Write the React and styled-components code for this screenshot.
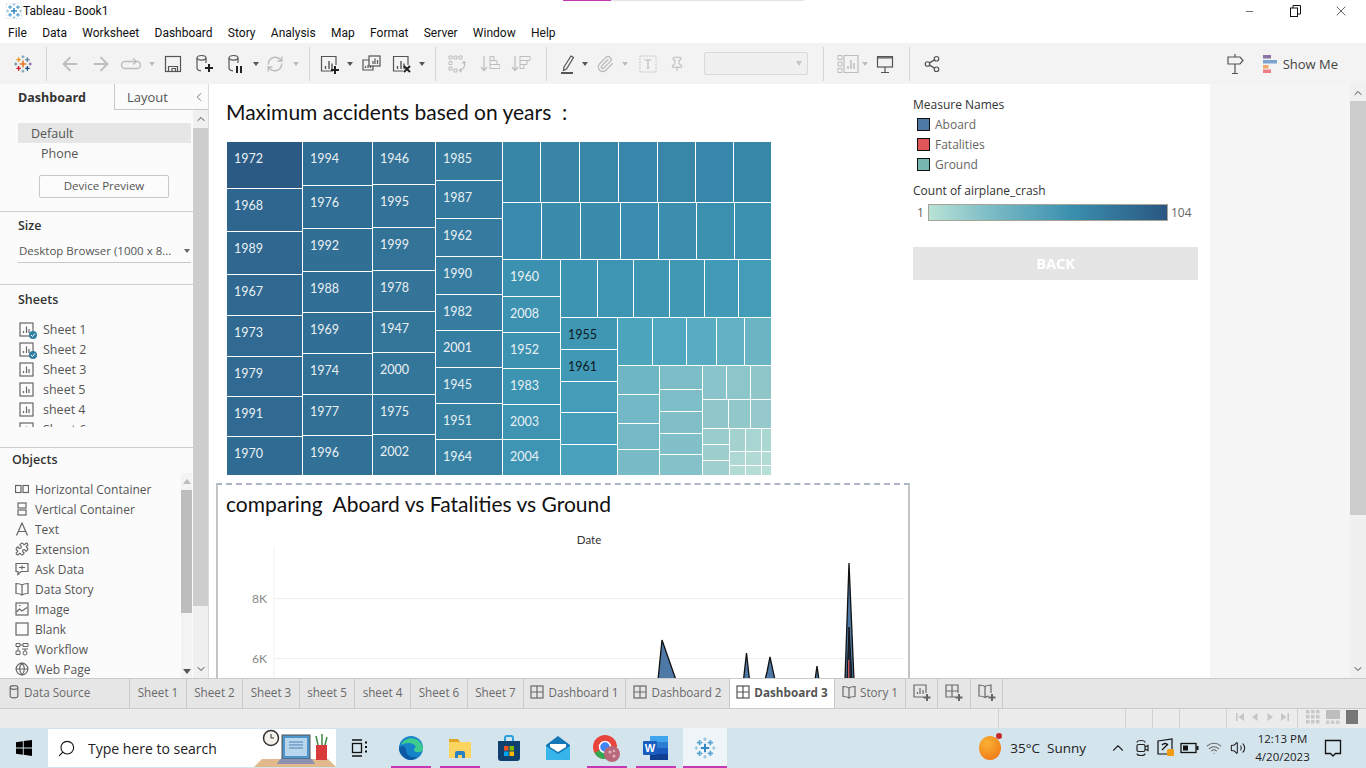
import React from 'react';
import styled, { createGlobalStyle } from 'styled-components';
import { ArrowLeft, ArrowRight, Paperclip, Pin, Share2, RefreshCw, Globe, Puzzle, Search, ChevronUp, ChevronDown, ChevronLeft, Minus, X, Volume2, Wifi } from 'lucide-react';

const Global = createGlobalStyle`
  html, body { margin: 0; padding: 0; overflow: hidden; background: #fff; }
  * { box-sizing: border-box; }
  #root { width: 1366px; height: 768px; }
`;
const UI = `"Open Sans", "Noto Sans", sans-serif`;
const BOOK = `Lato, "Open Sans", sans-serif`;
const MENU = `Roboto, "Open Sans", sans-serif`;

const Page = styled.div`position: relative; width: 1366px; height: 768px; display: flex; flex-direction: column; overflow: hidden; font-family: ${UI}; font-size: 12px; color: #222;`;
const TopLine = styled.div`position: absolute; top: 0; left: 563px; width: 241px; height: 1px; background: linear-gradient(90deg, #c239b3 0 48px, #e4e4e4 48px);`;

const TitleBar = styled.div`height: 22px; display: flex; align-items: center; padding-left: 6px; gap: 1px; flex: none;`;
const AppName = styled.span`font-family: ${MENU}; font-size: 12px; color: #111;`;
const WinControls = styled.div`margin-left: auto; display: flex; align-items: center; padding-right: 2px;`;
const WinButton = styled.div`width: 46px; height: 22px; display: flex; align-items: center; justify-content: center; color: #111;`;

const MenuBar = styled.div`height: 21px; display: flex; align-items: center; padding-left: 8px; gap: 15.3px; flex: none;`;
const MenuItem = styled.span`font-family: ${MENU}; font-size: 12px; color: #111;`;

const ToolBar = styled.div`height: 41px; background: #f3f3f3; display: flex; align-items: center; flex: none;`;
const ToolGroup = styled.div`height: 34px; display: flex; align-items: center; padding: 0 ${p => p.$r || 0}px 0 ${p => p.$l || 0}px; flex: none;`;
const ToolSep = styled.div`width: 1px; height: 34px; background: #d4d4d4; flex: none;`;
const Tool = styled.div`width: ${p => p.$w}px; height: 24px; display: flex; align-items: center; justify-content: center; color: ${p => p.$off ? '#bdbdbd' : '#555'}; flex: none;`;
const Caret = styled.div`width: ${p => p.$w}px; display: flex; justify-content: center; flex: none; &::after { content: ''; flex: none; border: 3px solid transparent; border-top: 4px solid ${p => p.$off ? '#bdbdbd' : '#555'}; border-bottom: 0; }`;
const ToolSelect = styled.div`width: 104px; height: 23px; margin-left: 19px; border: 1px solid #d9d9d9; border-radius: 2px; background: #f0f0f0; display: flex; align-items: center; justify-content: flex-end; padding-right: 5px; flex: none; &::after { content: ''; border: 3px solid transparent; border-top: 5px solid #c4c4c4; border-bottom: 0; }`;
const ToolRight = styled.div`margin-left: auto; display: flex; align-items: center; padding-right: 28px; color: #555;`;
const ShowMeIcon = styled.span`display: flex; margin-left: 19px;`;
const ShowMeText = styled.span`font-size: 13px; color: #444; margin-left: 6px;`;

const Work = styled.div`height: 594px; display: flex; flex: none; overflow: hidden;`;
const Sidebar = styled.aside`width: 209px; flex: none; display: flex; flex-direction: column; background: #fbfbfb; border-right: 1px solid #dcdcdc;`;
const SideTabs = styled.div`height: 26px; display: flex; flex: none;`;
const SideTab = styled.div`width: 114px; padding-left: 18px; display: flex; align-items: center; font-weight: 700; font-size: 12.5px; color: #333;`;
const SideTabAlt = styled.div`flex: 1; display: flex; align-items: center; padding-left: 12px; border-left: 1px solid #c8c8c8; border-bottom: 1px solid #c8c8c8; font-size: 13px; color: #555;`;
const CollapseBtn = styled.span`margin-left: auto; margin-right: 2px; display: flex; color: #666;`;
const SideBody = styled.div`height: 568px; display: flex; flex: none;`;
const SideContent = styled.div`width: 193px; flex: none; display: flex; flex-direction: column;`;
const Section = styled.section`height: ${p => p.$h}px; border-bottom: ${p => p.$last ? 0 : '1px solid #cfcfcf'}; flex: none; padding-top: ${p => p.$pt || 0}px; overflow: hidden;`;
const ModeRow = styled.div`height: 20px; margin: 0 2px 0 18px; padding-left: ${p => p.$indent}px; display: flex; align-items: center; font-size: 12.5px; color: #555; background: ${p => p.$on ? '#e6e6e6' : 'transparent'};`;
const DeviceBtn = styled.div`width: 130px; height: 23px; margin: 12px 0 0 39px; padding-bottom: 2px; border: 1px solid #c8c8c8; border-radius: 2px; display: flex; align-items: center; justify-content: center; font-size: 11.5px; color: #555; background: #fcfcfc;`;
const SecHead = styled.h3`margin: 0 0 0 ${p => p.$x || 18}px; height: 16px; line-height: 16px; font-size: 12.5px; font-weight: 600; color: #333;`;
const SizeSelect = styled.div`height: 20px; margin: 9px 2px 0 18px; padding: 0 0 4px 1px; border-bottom: 1px solid #c8c8c8; display: flex; align-items: center; justify-content: space-between; font-size: 11.5px; color: #555; white-space: nowrap; &::after { content: ''; border: 3px solid transparent; border-top: 4px solid #666; border-bottom: 0; margin-right: 1px; }`;
const SheetList = styled.div`height: 108px; margin-top: 11px; overflow: hidden;`;
const SheetRow = styled.div`height: 20px; display: flex; align-items: center; padding-left: 19px; gap: 9px; font-size: 12.5px; color: #555;`;
const SheetIconWrap = styled.span`position: relative; display: flex; width: 15px; height: 15px; color: #666; flex: none;`;
const Check = styled.span`position: absolute; right: -3px; bottom: -2px; width: 8px; height: 8px; border-radius: 50%; background: #2f7fa3; display: flex; align-items: center; justify-content: center;`;
const ObjBody = styled.div`display: flex; margin-top: 5px; height: 205px;`;
const ObjList = styled.div`width: 181px; padding-top: 6px; flex: none; overflow: hidden;`;
const ObjRow = styled.div`height: 20px; display: flex; align-items: center; padding-left: 15px; gap: 6px; font-size: 12px; color: #555; white-space: nowrap;`;
const ObjIcon = styled.span`width: 14px; height: 16px; display: flex; align-items: center; justify-content: center; color: #666; flex: none;`;
const MiniBar = styled.div`width: 11px; flex: none; background: #f3f3f3; display: flex; flex-direction: column; align-items: center;`;
const MiniArrow = styled.div`height: ${p => p.$h}px; flex: none; display: flex; align-items: ${p => p.$up ? 'center' : 'flex-end'}; padding-bottom: ${p => p.$up ? 0 : 4}px; &::after { content: ''; border: 4px solid transparent; ${p => p.$up ? 'border-bottom: 5px solid #bbb; border-top: 0;' : 'border-top: 5px solid #555; border-bottom: 0;'} }`;
const MiniThumb = styled.div`width: 100%; height: 123px; background: #bdbdbd; flex: none;`;
const VScroll = styled.div`width: ${p => p.$w}px; flex: none; background: #f0f0f0; display: flex; flex-direction: column; color: #444;`;
const VArrow = styled.div`height: ${p => p.$h}px; flex: none; display: flex; align-items: center; justify-content: center;`;
const VThumb = styled.div`height: ${p => p.$h}px; background: #cdcdcd; flex: none;`;
const VGap = styled.div`flex: 1;`;

const Canvas = styled.main`width: 1001px; flex: none; background: #fff; display: flex; overflow: hidden;`;
const LeftCol = styled.div`width: 701px; flex: none;`;
const BigTitle = styled.h2`margin: 0; height: 28px; line-height: 28px; font-family: ${BOOK}; font-weight: 400; font-size: 21px; color: #111; white-space: pre;`;
const TitleWrap = styled.div`padding: 14px 0 0 17px; height: 43px;`;
const Tree = styled.svg`display: block; margin: 15px 0 0 18px;`;
const Frame = styled.div`margin: 7px 0 0 7px; width: 694px; height: 260px; border: 2px solid #c4c4c4; border-top: 2px dashed #aeb6c6; padding-top: 5px;`;
const FrameTitle = styled.div`padding-left: 8px;`;
const Chart = styled.svg`display: block; margin-top: 10px;`;

const RightCol = styled.div`width: 285px; margin-left: 3px; flex: none; padding-top: 12px;`;
const LegendHead = styled.div`height: 17px; line-height: 17px; font-size: 12px; color: #333;`;
const LegendRows = styled.div`padding-top: 1px; margin-bottom: 8px;`;
const LegendRow = styled.div`height: 20px; display: flex; align-items: center; padding-left: 4px; gap: 5px; font-size: 12px; color: #666;`;
const Swatch = styled.span`width: 13px; height: 13px; border: 1.5px solid #111; background: ${p => p.$c}; flex: none;`;
const RampRow = styled.div`display: flex; align-items: center; height: 17px; margin-top: 5px; font-size: 12px; color: #666;`;
const RampMin = styled.span`width: 15px; text-align: center;`;
const Ramp = styled.div`width: 240px; height: 17px; border: 1px solid #a8a498; background: linear-gradient(90deg, #b9e2d6 0%, #7dbdc6 25%, #3a8fae 60%, #2a5782 100%);`;
const RampMax = styled.span`margin-left: 3px;`;
const BackBtn = styled.div`height: 33px; margin-top: 26px; background: #e5e5e5; color: #fff; display: flex; align-items: center; justify-content: center; font-weight: 700; font-size: 14.5px;`;
const GrayPanel = styled.div`width: 140px; flex: none; background: #f5f5f5;`;

const TabBar = styled.div`height: 31px; flex: none; display: flex; background: #e6e6e6; border-top: 1px solid #cacaca; border-bottom: 1px solid #cacaca;`;
const Tab = styled.div`width: ${p => p.$w}px; flex: none; display: flex; align-items: center; justify-content: ${p => p.$left ? 'flex-start' : 'center'}; gap: ${p => p.$left ? 5 : 4}px; padding-left: ${p => p.$left ? 9 : 0}px; padding-bottom: 3px; border-right: 1px solid #cacaca; color: #6a6a6a; font-size: 11.7px; white-space: nowrap; background: ${p => p.$on ? '#fff' : 'transparent'}; font-weight: ${p => p.$on ? 700 : 400}; ${p => p.$on ? 'color:#555;' : ''}`;
const StatusBar = styled.div`height: 19px; flex: none; display: flex; background: #ececec;`;
const StatusCell = styled.div`width: ${p => p.$w}px; flex: none; border-right: ${p => p.$line ? '1px solid #d2d2d2' : 0}; display: flex; align-items: center; justify-content: space-around; padding: 0 5px 3px;`;

const TaskBar = styled.div`height: 40px; flex: none; display: flex; align-items: stretch; background: #d4e4ec;`;
const StartBtn = styled.div`width: 48px; display: flex; align-items: center; justify-content: center; flex: none;`;
const SearchBox = styled.div`width: 288px; flex: none; margin: 1px 0; background: #fff; display: flex; align-items: center; padding-left: 9px; gap: 12px; overflow: hidden; position: relative;`;
const SearchText = styled.span`font-size: 14px; color: #222; white-space: nowrap;`;
const Desk = styled.svg`position: absolute; right: 0; bottom: 0;`;
const TaskApps = styled.div`display: flex; gap: 9px; margin-left: 4px; flex: none;`;
const TaskSlot = styled.div`width: ${p => p.$w || 40}px; margin-right: ${p => p.$mr || 0}px; margin-left: ${p => p.$ml || 0}px; flex: none; position: relative; display: flex; align-items: center; justify-content: center; background: ${p => p.$active ? '#eef4f7' : 'transparent'}; &::after { content: ''; position: absolute; left: 0; right: 0; bottom: 0; height: 2px; background: ${p => p.$mark ? '#c239b3' : 'transparent'}; }`;
const Tray = styled.div`margin-left: auto; display: flex; align-items: center; padding-right: 12px;`;
const Sun = styled.span`position: relative; width: 22px; height: 24px; flex: none; margin-right: 9px; border-radius: 50%; background: radial-gradient(circle at 35% 30%, #f9b233, #ee6f12);`;
const SunDot = styled.span`position: absolute; right: -1px; top: -3px; width: 6px; height: 6px; border-radius: 50%; background: #c62828;`;
const Weather = styled.span`font-size: 13.5px; color: #222; white-space: pre; margin-right: 20px;`;
const TraySlot = styled.div`width: 24px; flex: none; display: flex; justify-content: center; color: #222;`;
const Clock = styled.div`width: 59px; margin-left: 3px; text-align: center; font-size: 11.5px; line-height: 18px; color: #222;`;
const Notify = styled.div`width: 42px; display: flex; justify-content: center; flex: none;`;

const ramp = [[0,[43,90,132]],[.15,[48,106,146]],[.3,[53,120,156]],[.45,[56,136,170]],[.6,[64,153,182]],[.7,[80,167,191]],[.8,[124,189,200]],[.9,[150,202,203]],[1,[184,223,214]]];
const colorAt = t => {
  for (let i = 1; i < ramp.length; i++) if (t <= ramp[i][0]) {
    const [a, ca] = ramp[i - 1], [b, cb] = ramp[i], k = (t - a) / (b - a);
    return `rgb(${ca.map((v, j) => Math.round(v + (cb[j] - v) * k)).join(',')})`;
  }
  return 'rgb(184,223,214)';
};
const cells = [];
const add = (x0, x1, y0, y1, t, label, dark) => cells.push({ x0, x1, y0, y1, t, label, dark });
const col = (x0, x1, y0, y1, seps, t0, t1, labels = []) => {
  const e = [...seps, y1]; let top = y0;
  e.forEach((b, i) => { add(x0, x1, top, b, t0 + (t1 - t0) * i / Math.max(e.length - 1, 1), labels[i]); top = b + 1; });
};
const row = (x0, x1, y0, y1, seps, t0, t1) => {
  const e = [...seps, x1]; let left = x0;
  e.forEach((b, i) => { add(left, b, y0, y1, t0 + (t1 - t0) * i / Math.max(e.length - 1, 1)); left = b + 1; });
};
col(227, 302, 142, 475, [188,231,274,315,356,396,436], 0, .16, ['1972','1968','1989','1967','1973','1979','1991','1970']);
cells[0].t = 0; cells.slice(1, 8).forEach(c => { c.t = .11 + (c.t) * .3; });
col(303, 372, 142, 475, [185,228,271,312,353,394,435], .19, .22, ['1994','1976','1992','1988','1969','1974','1977','1996']);
col(373, 435, 142, 475, [184,227,270,311,352,394,434], .23, .29, ['1946','1995','1999','1978','1947','2000','1975','2002']);
col(436, 502, 142, 475, [180,218,256,294,330,367,403,439], .31, .39, ['1985','1987','1962','1990','1982','2001','1945','1951','1964']);
row(503, 771, 142, 202, [540,579,618,657,695,733], .42, .45);
row(503, 771, 203, 259, [541,580,620,658,696,734], .47, .52);
col(503, 560, 260, 475, [296,332,368,404,439], .53, .56, ['1960','2008','1952','1983','2003','2004']);
row(561, 771, 260, 317, [597,633,669,704,738], .55, .62);
col(561, 617, 318, 475, [349,381,412,444], .58, .66, ['1955','1961']);
cells.filter(c => c.label === '1955' || c.label === '1961').forEach(c => { c.dark = true; });
row(618, 771, 318, 365, [652,686,716,744], .68, .76);
col(618, 659, 366, 475, [394,423,449], .77, .79);
col(660, 702, 366, 475, [389,411,433,454], .8, .83);
row(703, 771, 366, 399, [726,750], .85, .87);
row(703, 771, 400, 428, [728,750], .88, .895);
col(703, 729, 429, 475, [444,460], .91, .93);
row(730, 771, 429, 451, [745,761], .94, .96);
row(730, 771, 452, 465, [745,761], .97, .98);
add(730, 745, 466, 475, .98); add(746, 761, 466, 475, .99); add(762, 771, 466, 475, 1);

const Treemap = () => (
  <Tree width="545" height="334" viewBox="227 142 545 334">
    <rect x="227" y="142" width="545" height="334" fill="#fff" />
    {cells.map((c, i) => <rect key={i} x={c.x0} y={c.y0} width={c.x1 - c.x0} height={c.y1 - c.y0} fill={colorAt(c.t)} />)}
    {cells.filter(c => c.label).map(c => (
      <text key={c.label} x={c.x0 + 7} y={c.y0 + 20.5} fontFamily={BOOK} fontSize="12.5" fill={c.dark ? '#0d1a22' : '#e9f1f4'}>{c.label}</text>
    ))}
  </Tree>
);

const Spike = ({ pts, fill = '#4e79a7' }) => <polygon points={pts} fill={fill} stroke="#111" strokeWidth="1.3" strokeLinejoin="miter" />;
const AreaChart = () => (
  <Chart width="689" height="150" viewBox="219 528 689 150">
    <text x="590" y="544" textAnchor="middle" fontFamily={BOOK} fontSize="11.5" fill="#333">Date</text>
    <line x1="275" y1="548" x2="275" y2="678" stroke="#efefef" />
    <line x1="275" y1="598.5" x2="905" y2="598.5" stroke="#eee" />
    <line x1="275" y1="658.5" x2="905" y2="658.5" stroke="#eee" />
    <text x="268" y="603" textAnchor="end" fontFamily={BOOK} fontSize="12" fill="#888">8K</text>
    <text x="268" y="663" textAnchor="end" fontFamily={BOOK} fontSize="12" fill="#888">6K</text>
    <Spike pts="659,680 663,640 677,680" />
    <Spike pts="744.5,680 747.5,653 750.5,680" />
    <Spike pts="766,680 768,672 771,657 776,680" />
    <Spike pts="816,680 818,666 820,680" />
    <Spike pts="846,680 850,563 855,680" />
    <polygon points="848,680 850,627 853,680" fill="#1d2a3a" stroke="#111" />
    <line x1="849.7" y1="660" x2="849.7" y2="680" stroke="#e15759" strokeWidth="1.2" />
  </Chart>
);

const Cross = ({ x, y, r, c, w = 1.4 }) => <path d={`M${x - r} ${y}H${x + r}M${x} ${y - r}V${y + r}`} stroke={c} strokeWidth={w} fill="none" />;
const ColorLogo = () => (
  <svg width="18" height="18" viewBox="0 0 18 18">
    <Cross x={9} y={9} r={3.4} c="#e8762b" w={1.6} />
    <Cross x={4.6} y={4.6} r={2.3} c="#e8962b" /><Cross x={13.4} y={4.6} r={2.3} c="#5b87a6" />
    <Cross x={4.6} y={13.4} r={2.3} c="#c72035" /><Cross x={13.4} y={13.4} r={2.3} c="#1f4f82" />
    <Cross x={9} y={1.8} r={1.5} c="#6f9bb5" w={1.1} /><Cross x={9} y={16.2} r={1.5} c="#6f9bb5" w={1.1} />
    <Cross x={1.8} y={9} r={1.5} c="#59879f" w={1.1} /><Cross x={16.2} y={9} r={1.5} c="#7b5a96" w={1.1} />
  </svg>
);
const BlueLogo = ({ s = 16, frame }) => (
  <svg width={s} height={s} viewBox="0 0 18 18">
    {frame && <rect x=".5" y=".5" width="17" height="17" fill="none" stroke="#cfdbe3" strokeDasharray="1.5 1.5" />}
    <Cross x={9} y={9} r={3.4} c="#2f86c1" w={1.6} />
    <Cross x={4.6} y={4.6} r={2.2} c="#5aa5d1" /><Cross x={13.4} y={4.6} r={2.2} c="#5aa5d1" />
    <Cross x={4.6} y={13.4} r={2.2} c="#5aa5d1" /><Cross x={13.4} y={13.4} r={2.2} c="#5aa5d1" />
    <Cross x={9} y={1.8} r={1.4} c="#8dbfdd" w={1} /><Cross x={9} y={16.2} r={1.4} c="#8dbfdd" w={1} />
    <Cross x={1.8} y={9} r={1.4} c="#8dbfdd" w={1} /><Cross x={16.2} y={9} r={1.4} c="#8dbfdd" w={1} />
  </svg>
);

const Svg = ({ w = 20, h = 20, vb, children }) => <svg width={w} height={h} viewBox={vb || `0 0 ${w} ${h}`} fill="none" stroke="currentColor" strokeWidth="1.2">{children}</svg>;
const Bars = () => <path d="M6.5 15v-3M10 15V7M13 15V9.5" strokeWidth="1.4" />;
const Loop = () => <Svg w={24} h={16}><path d="M6 5.5h12a3.5 3.5 0 0 1 0 7H6a3.5 3.5 0 0 1 0-7zM14 2.5l3.5 3-3.5 3" strokeWidth="1.3" /></Svg>;
const Save = () => <Svg w={18} h={18}><rect x="1.5" y="1.5" width="15" height="15" /><path d="M4.5 16.5v-5h9v5M8 16.5v-3h3.5v3" /></Svg>;
const Cyl = () => <g><ellipse cx="6.5" cy="3.8" rx="4.5" ry="2.3" /><path d="M2 4v10c0 1.5 1.5 2.6 4 2.8M11 4v5" /></g>;
const AddData = () => <Svg w={20} h={20}><Cyl /><path d="M14 10v8M10 14h8" stroke="#222" strokeWidth="2" /></Svg>;
const PauseData = () => <Svg w={18} h={20}><Cyl /><path d="M10 12v7M14 12v7" stroke="#222" strokeWidth="2" /></Svg>;
const NewSheet = () => <Svg w={22} h={20}><path d="M14 17H2.5V2.5h14.5V11" /><Bars /><path d="M16 12v8M12 16h8" stroke="#222" strokeWidth="2" /></Svg>;
const Dup = () => <Svg w={20} h={18}><rect x="8" y="1" width="11" height="10" /><path d="M8 5H2v10h10V11" /><path d="M12 9V6M14 9V3.5M16.5 9V5M4.5 13v-2M7 13v-3M9.5 13v-2" /></Svg>;
const ClearSheet = () => <Svg w={22} h={20}><path d="M12 17H2.5V2.5h14.5V11" /><Bars /><path d="M13 12l6 6M19 12l-6 6" stroke="#222" strokeWidth="2" /></Svg>;
const SwapI = () => <Svg w={20} h={20}><path d="M2 2h3v3H2zM7 2h3v3H7zM12 2h3v3h-3zM2 7.5h3v3H2zM2 13h3v3H2zM7 15h3v3H7z" strokeWidth="1" /><path d="M17 8c1.5 4-.5 7-4 8.5M15.500 9.500l1.500-2 2 1.500M14.500 18l-2-1.500 1.500-2" /></Svg>;
const SortUp = () => <Svg w={20} h={20}><path d="M4 2v14M1 13l3 3.500 3-3.500" /><path d="M10 2.500h4v4h-4zM10 6.500h7v4h-7zM10 10.500h10v4H10z" strokeWidth="1" /></Svg>;
const SortDown = () => <Svg w={20} h={20}><path d="M4 2v14M1 13l3 3.500 3-3.500" /><path d="M9 2.500h10v4H9zM9 6.500h7v4H9zM9 10.500h4v4H9z" strokeWidth="1" /></Svg>;
const Pen = () => <Svg w={16} h={20}><path d="M4 13l7-11 2.500 1.500-7 11.500-3 1.500z" /><path d="M1 19h12" stroke="#555" strokeWidth="2" /></Svg>;
const TBox = () => <Svg w={18} h={18}><rect x="1" y="1" width="16" height="16" strokeDasharray="1.6 1.4" strokeWidth="1" /><path d="M5.500 5h7M9 5v8M7.500 13h3" /></Svg>;
const ChartBox = () => <Svg w={22} h={20}><path d="M1 1.500h4v4H1zM1 8h4v4H1zM1 14.500h4v4H1z" strokeWidth="1" /><path d="M7 1.500h14v17H7z" /><path d="M11 15v-3M14 15V6M17 15V9" strokeWidth="1.500" /></Svg>;
const Present = () => <Svg w={18} h={20}><rect x="1.500" y="3" width="15" height="10" /><path d="M1 2.500h16M1 4h16" strokeWidth="1.200" /><path d="M9 13v5M5 18.500h8" /></Svg>;
const SignPost = () => <Svg w={18} h={22}><path d="M9 1v3M2 4h12l3 3.500-3 3.500H2zM9 11v9M6 20.500h6" /></Svg>;
const ShowMeI = () => <svg width="14" height="18"><rect y="0" width="8" height="3.500" fill="#8a74a6" /><rect y="5" width="14" height="3.500" fill="#7ba4d0" /><rect y="10" width="5.500" height="3.500" fill="#f2a96b" /><rect y="14.500" width="8" height="3.500" fill="#f17c86" /></svg>;
const SheetGlyph = ({ s = 15 }) => <Svg w={s} h={s} vb="0 0 15 15"><rect x="1" y="1" width="13" height="13" /><path d="M4.500 11V9M7.500 11V4.500M10 11V7" /></Svg>;
const HCont = () => <Svg w={14} h={12} vb="0 0 14 12"><rect x=".5" y="2.500" width="5.500" height="7" /><rect x="8" y="2.500" width="5.500" height="7" /></Svg>;
const VCont = () => <Svg w={12} h={14} vb="0 0 12 14"><rect x="2" y="1" width="8" height="5" /><rect x="2" y="8" width="8" height="5" /></Svg>;
const AGlyph = () => <Svg w={14} h={14} vb="0 0 14 14"><path d="M1.500 13.500L7 1l5.500 12.500M3.500 9.500h7" /></Svg>;
const Bubble = () => <Svg w={14} h={14} vb="0 0 14 14"><path d="M1 1.500h12v8H6l-3 3v-3H1zM4 5.500h6M7 3.500v4" /></Svg>;
const ImgI = () => <Svg w={14} h={14} vb="0 0 14 14"><rect x="1" y="1" width="12" height="12" /><path d="M1.500 10l3-3 2.500 2 5-3.500M4 3.500h1.500" /></Svg>;
const Blank = () => <Svg w={14} h={14} vb="0 0 14 14"><rect x="1" y="1" width="12" height="12" /></Svg>;
const Flow = () => <Svg w={14} h={14} vb="0 0 14 14"><path d="M1 1.500h4v3H1zM8 1.500h5v3H8zM1 9h4v3.500H1zM5 3h3M3 4.500V9M7 7h6M10 7v2" strokeWidth="1" /><circle cx="10" cy="11" r="2" strokeWidth="1" /></Svg>;
const Book = () => <Svg w={14} h={14} vb="0 0 14 14"><path d="M7 3C5.500 1.800 3.500 1.500 1 1.500v10c2.500 0 4.500.3 6 1.500 1.500-1.200 3.500-1.500 6-1.500v-10C10.500 1.500 8.500 1.800 7 3zM7 3v10" /></Svg>;
const CylSmall = () => <Svg w={10} h={14} vb="0 0 10 14"><ellipse cx="5" cy="2.500" rx="3.800" ry="1.800" /><path d="M1.200 2.500v8.500c0 1 1.700 1.800 3.800 1.800s3.800-.8 3.800-1.800V2.500" /></Svg>;
const Grid = () => <Svg w={14} h={14} vb="0 0 14 14"><rect x="1" y="1" width="12" height="12" /><path d="M7 1v12M1 7h12" /></Svg>;
const AddTab = ({ kind }) => <Svg w={22} h={20}>{kind === 'sheet' && <><path d="M13 15H3V3h12v8" /><path d="M6.500 12v-2M9 12V6M12 12V8" /></>}{kind === 'dash' && <><path d="M13 15H3V3h12v8M9 3v12M3 9h12" /></>}{kind === 'story' && <path d="M9 4.500C7.500 3.500 5.500 3 3 3v11c2.500 0 4.500.5 6 1.500 1-.7 2-1.100 3.500-1.300M9 4.500C10.500 3.500 12.500 3 15 3v8M9 4.500v11" />}<path d="M16 12v7M12.500 15.500h7" stroke="#666" strokeWidth="2" /></Svg>;

const Nav = ({ d }) => <svg width="10" height="10" viewBox="0 0 10 10" fill="#c6c6c6"><path d={d} /></svg>;
const ViewI = ({ n }) => n === 0
  ? <svg width="14" height="14" fill="#c8c8c8">{[0,5,10].flatMap(x => [0,5,10].map(y => <rect key={x + '-' + y} x={x} y={y} width="3.500" height="3.500" />))}</svg>
  : n === 1 ? <svg width="14" height="14"><rect width="14" height="9" fill="#bdbdbd" /><rect y="10.500" width="3.500" height="3.500" fill="#ccc" /><rect x="5" y="10.500" width="3.500" height="3.500" fill="#ccc" /><rect x="10" y="10.500" width="3.500" height="3.500" fill="#ccc" /></svg>
  : <svg width="12" height="14"><rect width="12" height="14" fill="#777" /></svg>;

const WinLogo = () => <svg width="16" height="16" fill="#000"><path d="M0 2.200l6.800-1V7.500H0zM7.700 1L16 0v7.500H7.700zM0 8.500h6.800v6.300l-6.800-1zM7.700 8.500H16V16l-8.300-1.200z" /></svg>;
const DeskArt = () => (
  <Desk width="82" height="38" viewBox="0 0 82 38">
    <path d="M0 38l8-8h66l8 8z" fill="#e2b98c" />
    <circle cx="17" cy="9" r="7.500" fill="#f4f1ea" stroke="#333" strokeWidth="1.500" /><path d="M17 5v4h3" stroke="#333" fill="none" />
    <rect x="28" y="6" width="28" height="24" fill="#4f95c9" stroke="#555" /><rect x="31" y="9" width="22" height="18" fill="#b9d7ec" />
    <path d="M35 13h14M35 16h14M35 19h14" stroke="#6f9fc5" strokeWidth="1.500" />
    <path d="M26 30h32l3 5H23z" fill="#8b8fb0" />
    <rect x="62" y="16" width="11" height="15" fill="#d93a3a" /><path d="M64 16l-2-9M68 16V5M71 16l2-8" stroke="#3c8c4a" strokeWidth="1.500" />
  </Desk>
);
const EdgeI = () => <svg width="26" height="26" viewBox="0 0 26 26"><circle cx="13" cy="13" r="12" fill="#1683c9" /><path d="M3 10C6 1 22 0 25 13c.3 3-3 5-7 4-3-.8-2-4 0-5-2-5-10-5-15-2z" fill="#3ecb8f" /><path d="M8 15c0 5 5 8 10 7 2-.5 0 2-5 3C7 25 1 19 1 13c2-3 7-2 7 2z" fill="#0c59a4" /></svg>;
const FolderI = () => <svg width="24" height="24" viewBox="0 0 24 24"><path d="M1 3h9l2 3H1z" fill="#e0a526" /><rect x="1" y="6" width="22" height="16" fill="#fbd55f" /><path d="M7 22v-5a2 2 0 0 1 2-2h6a2 2 0 0 1 2 2v5h-3v-3h-4v3z" fill="#2b7fc4" /></svg>;
const StoreI = () => <svg width="24" height="26" viewBox="0 0 24 26"><path d="M8 6V3a2 2 0 0 1 2-2h4a2 2 0 0 1 2 2v3" fill="none" stroke="#2ca0dc" strokeWidth="2" /><path d="M1 6h22v17a3 3 0 0 1-3 3H4a3 3 0 0 1-3-3z" fill="#10416e" /><rect x="7" y="11" width="4.500" height="4.500" fill="#f25022" /><rect x="12.500" y="11" width="4.500" height="4.500" fill="#7fba00" /><rect x="7" y="16.500" width="4.500" height="4.500" fill="#00a4ef" /><rect x="12.500" y="16.500" width="4.500" height="4.500" fill="#ffb900" /></svg>;
const MailI = () => <svg width="26" height="24" viewBox="0 0 26 24"><path d="M1 9L13 0l12 9v15H1z" fill="#1477b8" /><path d="M1 10l12 8 12-8v14H1z" fill="#37b4ea" /><path d="M5 8h16v3l-8 5-8-5z" fill="#fff" /></svg>;
const ChromeI = () => <svg width="28" height="30" viewBox="0 0 28 30"><circle cx="12" cy="14" r="12" fill="#e8453c" /><path d="M12 14L1.600 20A12 12 0 0 0 14 25.800z" fill="#34a853" /><path d="M12 14h12a12 12 0 0 1-10 11.800z" fill="#fbbc05" /><circle cx="12" cy="14" r="5.500" fill="#4285f4" stroke="#fff" strokeWidth="1.500" /><circle cx="19" cy="21" r="8" fill="#b8687a" /><circle cx="17" cy="19" r="1.500" fill="#e3b4bd" /><circle cx="21" cy="23" r="1.500" fill="#e3b4bd" /><circle cx="21" cy="18" r="1.200" fill="#e3b4bd" /></svg>;
const WordI = () => <svg width="26" height="26" viewBox="0 0 26 26"><rect x="7" y="1" width="18" height="6" fill="#41a5ee" /><rect x="7" y="7" width="18" height="6" fill="#2b7cd3" /><rect x="7" y="13" width="18" height="6" fill="#185abd" /><rect x="7" y="19" width="18" height="6" fill="#103f91" /><rect x="0" y="6" width="14" height="14" rx="1" fill="#1a5cc0" /><text x="7" y="17" textAnchor="middle" fontFamily="Liberation Sans, sans-serif" fontWeight="700" fontSize="11" fill="#fff">W</text></svg>;
const TaskView = () => <svg width="18" height="18" viewBox="0 0 18 18" fill="none" stroke="#111" strokeWidth="1.300"><path d="M1 1h10M1 17h10" /><rect x="1.500" y="4.500" width="9" height="9" /><path d="M14 3.500h2M14 8h2M14 12.500h2" strokeWidth="2" /></svg>;
const Meet = () => <Svg w={14} h={18}><path d="M2 3.500C2 2 4 1.500 6 1.500s4 .5 4 2M2 14.500c0 1.500 2 2 4 2s4-.5 4-2" /><rect x="2" y="5.500" width="8" height="7" rx="1.500" /><path d="M10 8l3-1.500v5L10 10" /></Svg>;
const AppTray = () => <svg width="18" height="20" viewBox="0 0 18 20" fill="none" stroke="#111" strokeWidth="1.200"><path d="M1 3l14-2v15H1z" /><path d="M5 12l6-6M5 7c2-2 4-2 6 0" /><rect x="10" y="11" width="7" height="7" rx="1.500" fill="#f39c12" stroke="none" /></svg>;
const Battery = () => <svg width="20" height="12" viewBox="0 0 20 12" fill="none" stroke="#111" strokeWidth="1.300"><rect x="1" y="1.500" width="15" height="9" /><rect x="3" y="3.500" width="5" height="5" fill="#111" stroke="none" /><rect x="16.500" y="4" width="2" height="4" fill="#111" stroke="none" /></svg>;
const Bubble2 = () => <svg width="18" height="19" viewBox="0 0 18 19" fill="none" stroke="#111" strokeWidth="1.300"><path d="M1.500 1.500h15v13h-5L9 17l-2.500-2.500h-5z" /></svg>;

const tools1 = [['t',30,<ArrowLeft size={22} strokeWidth={2} />,1],['t',32,<ArrowRight size={22} strokeWidth={2} />,1],['t',28,<Loop />,1],['c',14,null,1],['t',28,<Save />],['t',36,<AddData />],['t',26,<PauseData />],['c',14],['t',24,<RefreshCw size={18} strokeWidth={2} />,1],['c',18,null,1]];
const tools2 = [['t',28,<NewSheet />],['c',12],['t',30,<Dup />],['t',32,<ClearSheet />],['c',8]];
const tools3 = [['t',30,<SwapI />,1],['t',36,<SortUp />,1],['t',26,<SortDown />,1]];
const renderTools = list => list.map(([k, w, ic, off], i) => k === 't' ? <Tool key={i} $w={w} $off={off}>{ic}</Tool> : <Caret key={i} $w={w} $off={off} />);

const menu = ['File','Data','Worksheet','Dashboard','Story','Analysis','Map','Format','Server','Window','Help'];
const sheets = ['Sheet 1','Sheet 2','Sheet 3','sheet 5','sheet 4','Sheet 6'];
const objects = [['Horizontal Container',<HCont />],['Vertical Container',<VCont />],['Text',<AGlyph />],['Extension',<Puzzle size={14} strokeWidth={2} />],['Ask Data',<Bubble />],['Data Story',<Book />],['Image',<ImgI />],['Blank',<Blank />],['Workflow',<Flow />],['Web Page',<Globe size={14} strokeWidth={2} />]];
const tabs = [['Sheet 1',57],['Sheet 2',56],['Sheet 3',57],['sheet 5',55],['sheet 4',56],['Sheet 6',57],['Sheet 7',56],['Dashboard 1',102,<Grid />],['Dashboard 2',104,<Grid />],['Dashboard 3',105,<Grid />,true],['Story 1',71,<Book />]];

export default function App() {
  return (
    <Page>
      <Global />
      <TopLine />
      <TitleBar>
        <BlueLogo s={16} frame />
        <AppName>Tableau - Book1</AppName>
        <WinControls>
          <WinButton><Minus size={11} strokeWidth={1.3} /></WinButton>
          <WinButton><svg width="11" height="12" fill="none" stroke="#111"><rect x=".5" y="3" width="7" height="8.500" /><path d="M3 3V.5h7.500v8.500H8" /></svg></WinButton>
          <WinButton><X size={16} strokeWidth={1} /></WinButton>
        </WinControls>
      </TitleBar>
      <MenuBar>{menu.map(m => <MenuItem key={m}>{m}</MenuItem>)}</MenuBar>
      <ToolBar>
        <ToolGroup><Tool $w={46}><ColorLogo /></Tool></ToolGroup>
        <ToolSep />
        <ToolGroup $l={8} $r={4}>{renderTools(tools1)}</ToolGroup>
        <ToolSep />
        <ToolGroup $l={6} $r={9}>{renderTools(tools2)}</ToolGroup>
        <ToolSep />
        <ToolGroup $l={6} $r={12}>{renderTools(tools3)}</ToolGroup>
        <ToolSep />
        <ToolGroup $l={6} $r={15}>
          <Tool $w={30}><Pen /></Tool><Caret $w={4} />
          <Tool $w={36} $off><Paperclip size={18} strokeWidth={1.8} /></Tool><Caret $w={4} $off />
          <Tool $w={42} $off><TBox /></Tool>
          <Tool $w={16} $off><Pin size={16} strokeWidth={1.6} /></Tool>
          <ToolSelect />
        </ToolGroup>
        <ToolSep />
        <ToolGroup $l={10} $r={7}>
          <Tool $w={28} $off><ChartBox /></Tool><Caret $w={6} $off />
          <Tool $w={34}><Present /></Tool>
        </ToolGroup>
        <ToolSep />
        <ToolGroup $l={6}><Tool $w={32}><Share2 size={18} strokeWidth={1.6} /></Tool></ToolGroup>
        <ToolRight><SignPost /><ShowMeIcon><ShowMeI /></ShowMeIcon><ShowMeText>Show Me</ShowMeText></ToolRight>
      </ToolBar>
      <Work>
        <Sidebar>
          <SideTabs>
            <SideTab>Dashboard</SideTab>
            <SideTabAlt>Layout<CollapseBtn><ChevronLeft size={14} strokeWidth={1.5} /></CollapseBtn></SideTabAlt>
          </SideTabs>
          <SideBody>
            <SideContent>
              <Section $h={102} $pt={13}>
                <ModeRow $on $indent={13}>Default</ModeRow>
                <ModeRow $indent={23}>Phone</ModeRow>
                <DeviceBtn>Device Preview</DeviceBtn>
              </Section>
              <Section $h={73} $pt={6}>
                <SecHead>Size</SecHead>
                <SizeSelect>Desktop Browser (1000 x 8...</SizeSelect>
              </Section>
              <Section $h={163} $pt={7}>
                <SecHead>Sheets</SecHead>
                <SheetList>
                  {sheets.map((s, i) => (
                    <SheetRow key={s}>
                      <SheetIconWrap><SheetGlyph />{i < 2 && <Check><svg width="6" height="6" fill="none" stroke="#fff"><path d="M1 3l1.500 1.500L5 1.500" /></svg></Check>}</SheetIconWrap>
                      {s}
                    </SheetRow>
                  ))}
                </SheetList>
              </Section>
              <Section $h={230} $pt={4} $last>
                <SecHead $x={12}>Objects</SecHead>
                <ObjBody>
                  <ObjList>{objects.map(([n, ic]) => <ObjRow key={n}><ObjIcon>{ic}</ObjIcon>{n}</ObjRow>)}</ObjList>
                  <MiniBar><MiniArrow $h={17} $up /><MiniThumb /><VGap /><MiniArrow $h={17} /></MiniBar>
                </ObjBody>
              </Section>
            </SideContent>
            <VScroll $w={15}>
              <VArrow $h={18}><ChevronUp size={12} strokeWidth={2} /></VArrow>
              <VThumb $h={478} />
              <VGap />
              <VArrow $h={18}><ChevronDown size={12} strokeWidth={2} /></VArrow>
            </VScroll>
          </SideBody>
        </Sidebar>
        <Canvas>
          <LeftCol>
            <TitleWrap><BigTitle>Maximum accidents based on years  :</BigTitle></TitleWrap>
            <Treemap />
            <Frame>
              <FrameTitle><BigTitle>comparing  Aboard vs Fatalities vs Ground</BigTitle></FrameTitle>
              <AreaChart />
            </Frame>
          </LeftCol>
          <RightCol>
            <LegendHead>Measure Names</LegendHead>
            <LegendRows>
              <LegendRow><Swatch $c="#4e79a7" />Aboard</LegendRow>
              <LegendRow><Swatch $c="#e15759" />Fatalities</LegendRow>
              <LegendRow><Swatch $c="#76b7b2" />Ground</LegendRow>
            </LegendRows>
            <LegendHead>Count of airplane_crash</LegendHead>
            <RampRow><RampMin>1</RampMin><Ramp /><RampMax>104</RampMax></RampRow>
            <BackBtn>BACK</BackBtn>
          </RightCol>
        </Canvas>
        <GrayPanel />
        <VScroll $w={16}>
          <VArrow $h={17}><ChevronUp size={12} strokeWidth={2} /></VArrow>
          <VThumb $h={414} />
          <VGap />
          <VArrow $h={18}><ChevronDown size={12} strokeWidth={2} /></VArrow>
        </VScroll>
      </Work>
      <TabBar>
        <Tab $w={130} $left><CylSmall />Data Source</Tab>
        {tabs.map(([n, w, ic, on]) => <Tab key={n} $w={w} $on={on}>{ic}{n}</Tab>)}
        <Tab $w={32}><AddTab kind="sheet" /></Tab>
        <Tab $w={33}><AddTab kind="dash" /></Tab>
        <Tab $w={32}><AddTab kind="story" /></Tab>
      </TabBar>
      <StatusBar>
        <StatusCell $w={999} $line />
        <StatusCell $w={127} $line />
        <StatusCell $w={27} $line />
        <StatusCell $w={27} $line />
        <StatusCell $w={47} $line />
        <StatusCell $w={71} $line>
          <Nav d="M1 1h1.500v8H1zM9 1v8L3.500 5z" /><Nav d="M7.500 1v8L2 5z" /><Nav d="M2.500 1v8L8 5z" /><Nav d="M1 1v8l5.500-4zM7.500 1H9v8H7.500z" />
        </StatusCell>
        <StatusCell $w={68}><ViewI n={0} /><ViewI n={1} /><ViewI n={2} /></StatusCell>
      </StatusBar>
      <TaskBar>
        <StartBtn><WinLogo /></StartBtn>
        <SearchBox>
          <Search size={19} strokeWidth={1.4} color="#111" transform="scale(-1,1)" />
          <SearchText>Type here to search</SearchText>
          <DeskArt />
        </SearchBox>
        <TaskApps>
          <TaskSlot $mr={2}><TaskView /></TaskSlot>
          <TaskSlot $mark><EdgeI /></TaskSlot>
          <TaskSlot $mark><FolderI /></TaskSlot>
          <TaskSlot><StoreI /></TaskSlot>
          <TaskSlot><MailI /></TaskSlot>
          <TaskSlot $mark><ChromeI /></TaskSlot>
          <TaskSlot $mark><WordI /></TaskSlot>
          <TaskSlot $w={44} $ml={-2} $mark $active><BlueLogo s={22} /></TaskSlot>
        </TaskApps>
        <Tray>
          <Sun><SunDot /></Sun>
          <Weather>35°C  Sunny</Weather>
          <TraySlot><ChevronUp size={18} strokeWidth={1.5} /></TraySlot>
          <TraySlot><Meet /></TraySlot>
          <TraySlot><AppTray /></TraySlot>
          <TraySlot><Battery /></TraySlot>
          <TraySlot><Wifi size={16} strokeWidth={1.6} color="#666" /></TraySlot>
          <TraySlot><Volume2 size={16} strokeWidth={1.6} /></TraySlot>
          <Clock>12:13 PM<br />4/20/2023</Clock>
          <Notify><Bubble2 /></Notify>
        </Tray>
      </TaskBar>
    </Page>
  );
}
